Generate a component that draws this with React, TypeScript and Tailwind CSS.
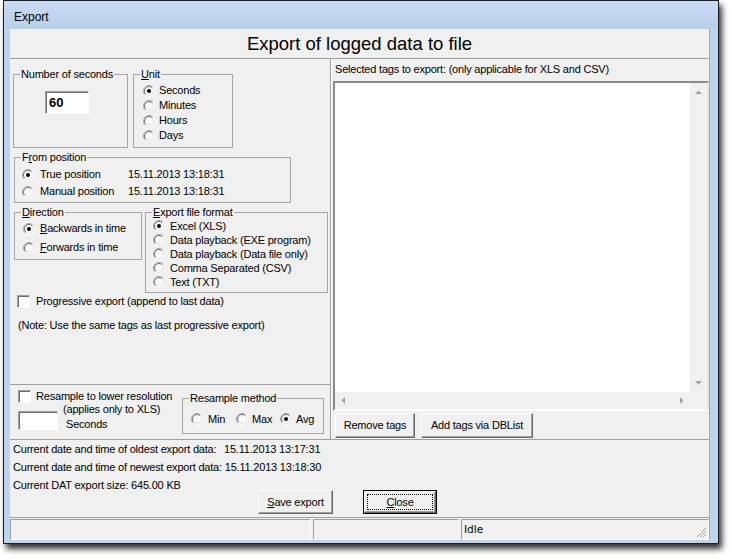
import React from "react";

const Radio = ({ checked }: { checked?: boolean }) => (
  <svg width="12" height="12" viewBox="0 0 12 12" className="shrink-0">
    <circle cx="6" cy="6" r="5" fill="#fbfbfb" />
    <path d="M2.1 9.9 A5.5 5.5 0 0 1 9.9 2.1" stroke="#a9a9a9" fill="none" />
    <path d="M2.8 9.2 A4.5 4.5 0 0 1 9.2 2.8" stroke="#6e6e6e" fill="none" />
    <path d="M9.9 2.1 A5.5 5.5 0 0 1 2.1 9.9" stroke="#ffffff" fill="none" />
    <path d="M9.2 2.8 A4.5 4.5 0 0 1 2.8 9.2" stroke="#e2e2e2" fill="none" />
    {checked && <circle cx="6" cy="6" r="2" fill="#000" />}
  </svg>
);

const CheckBox = () => (
  <div className="w-[13px] h-[13px] shrink-0 bg-white border border-t-[#a0a0a0] border-l-[#a0a0a0] border-b-white border-r-white shadow-[inset_1px_1px_0_#6e6e6e]" />
);

const Group = ({
  label,
  className,
  children,
}: {
  label: React.ReactNode;
  className?: string;
  children?: React.ReactNode;
}) => (
  <fieldset className={`border border-[#a6a6a6] shrink-0 ${className ?? ""}`}>
    <legend className="ml-[6px] px-[1px] leading-[13px]">{label}</legend>
    {children}
  </fieldset>
);

const Btn = ({ children, className }: { children: React.ReactNode; className?: string }) => (
  <button
    type="button"
    className={`flex items-center justify-center bg-[#f0f0f0] border border-t-white border-l-white border-b-[#696969] border-r-[#696969] shadow-[inset_-1px_-1px_0_#a0a0a0] leading-[13px] ${className ?? ""}`}
  >
    {children}
  </button>
);

const Sunken = ({ className, children }: { className?: string; children?: React.ReactNode }) => (
  <div
    className={`bg-white border border-t-[#a0a0a0] border-l-[#a0a0a0] border-b-white border-r-white shadow-[inset_1px_1px_0_#6e6e6e] ${className ?? ""}`}
  >
    {children}
  </div>
);

const Arrow = ({ dir }: { dir: "up" | "down" | "left" | "right" }) => {
  const pts = {
    up: "0,4 7,4 3.5,0.5",
    down: "0,0 7,0 3.5,3.5",
    left: "4,0 4,7 0.5,3.5",
    right: "0,0 0,7 3.5,3.5",
  }[dir];
  const w = dir === "up" || dir === "down" ? 7 : 4;
  const h = dir === "up" || dir === "down" ? 4 : 7;
  return (
    <svg width={w} height={h} viewBox={`0 0 ${w} ${h}`}>
      <polygon points={pts} fill="#a3a3a3" />
    </svg>
  );
};

export default function App() {
  return (
    <div className="w-[730px] h-[560px] bg-white font-['Liberation_Sans',Arial,sans-serif] text-[11px] tracking-[-0.2px] text-black overflow-hidden">
      <div className="ml-[3px] w-[716px] border border-[#1e1e1e] bg-[#bdd3ee] shadow-[3px_5px_6px_rgba(0,0,0,0.8)] flex flex-col">
        {/* title bar */}
        <div className="h-[28px] pl-[10px] pt-[3px] flex items-center bg-gradient-to-b from-[#cadcf3] to-[#b8cfeb] text-[12px] tracking-normal">
          Export
        </div>

        <div className="ml-[6px] mb-[3px] w-[700px] bg-[#f0f0f0] border-r border-[#a8a8a8] flex flex-col">
          {/* heading */}
          <div className="h-[30px] border-b border-[#a0a0a0] flex items-center justify-center text-[18.5px] tracking-normal">
            Export of logged data to file
          </div>

          {/* main */}
          <div className="h-[381px] border-b border-[#a0a0a0] flex">
            {/* left panel */}
            <div className="w-[320px] flex flex-col">
              <div className="flex-1 pt-[9px]">
                <div className="flex gap-[5px] pl-[3px]">
                  <Group label="Number of seconds" className="w-[115px] h-[80px]">
                    <Sunken className="mt-[10px] ml-[31px] w-[44px] h-[23px] flex items-center pl-[3px]">
                      <span className="font-bold text-[13px] tracking-normal">60</span>
                    </Sunken>
                  </Group>
                  <Group label={<><u>U</u>nit</>} className="w-[100px] h-[80px]">
                    <div className="pt-[2px]">
                      {["Seconds", "Minutes", "Hours", "Days"].map((u, i) => (
                        <div key={u} className="h-[15px] flex items-center gap-[4px] pl-[9px]">
                          <Radio checked={i === 0} />
                          <span className="leading-[13px]">{u}</span>
                        </div>
                      ))}
                    </div>
                  </Group>
                </div>

                <Group label={<>F<u>r</u>om position</>} className="mt-[3px] ml-[4px] w-[277px] h-[52px]">
                  <div className="pt-[2px]">
                    {["True position", "Manual position"].map((p, i) => (
                      <div key={p} className="h-[17px] flex items-center pl-[7px]">
                        <Radio checked={i === 0} />
                        <span className="ml-[6px] w-[88px] leading-[13px]">{p}</span>
                        <span className="leading-[13px]">15.11.2013 13:18:31</span>
                      </div>
                    ))}
                  </div>
                </Group>

                <div className="mt-[3px] ml-[4px] flex items-start gap-[3px]">
                  <Group label={<><u>D</u>irection</>} className="w-[128px] h-[54px]">
                    <div className="h-[19px] flex items-center gap-[5px] pl-[8px]">
                      <Radio checked />
                      <span className="leading-[13px]">
                        <u>B</u>ackwards in time
                      </span>
                    </div>
                    <div className="h-[19px] flex items-center gap-[5px] pl-[8px]">
                      <Radio />
                      <span className="leading-[13px]">
                        <u>F</u>orwards in time
                      </span>
                    </div>
                  </Group>
                  <Group label={<><u>E</u>xport file format</>} className="w-[183px] h-[87px]">
                    {[
                      "Excel (XLS)",
                      "Data playback (EXE program)",
                      "Data playback (Data file only)",
                      "Comma Separated (CSV)",
                      "Text (TXT)",
                    ].map((f, i) => (
                      <div key={f} className="h-[14px] flex items-center gap-[5px] pl-[7px]">
                        <Radio checked={i === 0} />
                        <span className="leading-[13px] whitespace-nowrap">{f}</span>
                      </div>
                    ))}
                  </Group>
                </div>

                <div className="mt-[1px] ml-[7px] h-[14px] flex items-center gap-[6px]">
                  <CheckBox />
                  <span className="leading-[13px]">Progressive export (append to last data)</span>
                </div>
                <div className="mt-[10px] ml-[8px] h-[14px] leading-[14px]">
                  (Note: Use the same tags as last progressive export)
                </div>
              </div>

              {/* resample section */}
              <div className="h-[55px] border-t border-[#a0a0a0] flex">
                <div className="w-[172px] pl-[8px] pt-[5px]">
                  <div className="h-[13px] flex items-center gap-[5px]">
                    <CheckBox />
                    <span className="leading-[13px] whitespace-nowrap">Resample to lower resolution</span>
                  </div>
                  <div className="flex items-start">
                    <Sunken className="mt-[8px] w-[40px] h-[19px] shrink-0" />
                    <div className="ml-[5px] -mt-[1px] leading-[15px]">
                      <div className="whitespace-nowrap">(applies only to XLS)</div>
                      <div className="pl-[3px]">Seconds</div>
                    </div>
                  </div>
                </div>
                <Group label="Resample method" className="mt-[7px] w-[142px] h-[42px]">
                  <div className="pt-[7px] h-[21px] flex items-center">
                    <div className="w-[53px] pl-[8px] flex items-center gap-[5px]">
                      <Radio />
                      <span className="leading-[13px]">Min</span>
                    </div>
                    <div className="w-[44px] flex items-center gap-[4px]">
                      <Radio />
                      <span className="leading-[13px]">Max</span>
                    </div>
                    <div className="flex items-center gap-[4px]">
                      <Radio checked />
                      <span className="leading-[13px]">Avg</span>
                    </div>
                  </div>
                </Group>
              </div>
            </div>

            {/* separator */}
            <div className="w-[2px] border-l border-[#a0a0a0] bg-white" />

            {/* right panel */}
            <div className="flex-1 pt-[4px] flex flex-col">
              <div className="pl-[3px] leading-[13px] whitespace-nowrap">
                Selected tags to export: (only applicable for XLS and CSV)
              </div>
              <div className="mt-[5px] ml-[1px] w-[376px] h-[330px] border-2 border-t-[#8c8c8c] border-l-[#8c8c8c] border-b-white border-r-[#e6e6e6] flex flex-col">
                <div className="flex-1 flex">
                  <div className="flex-1 bg-white" />
                  <div className="w-[17px] bg-[#f0f0f0] flex flex-col items-center justify-between py-[7px]">
                    <Arrow dir="up" />
                    <Arrow dir="down" />
                  </div>
                </div>
                <div className="h-[17px] flex">
                  <div className="flex-1 bg-[#f0f0f0] flex items-center justify-between px-[6px]">
                    <Arrow dir="left" />
                    <Arrow dir="right" />
                  </div>
                  <div className="w-[17px] bg-[#f0f0f0]" />
                </div>
              </div>
              <div className="mt-[2px] pl-[3px] flex gap-[6px]">
                <Btn className="w-[80px] h-[25px]">Remove tags</Btn>
                <Btn className="w-[112px] h-[25px]">Add tags via DBList</Btn>
              </div>
            </div>
          </div>

          {/* info area */}
          <div className="h-[77px] pl-[3px]">
            <div className="h-[18px] flex items-center whitespace-nowrap">
              <span className="w-[211px]">Current date and time of oldest export data:</span>
              <span>15.11.2013 13:17:31</span>
            </div>
            <div className="h-[18px] flex items-center whitespace-nowrap">
              Current date and time of newest export data: 15.11.2013 13:18:30
            </div>
            <div className="flex items-start">
              <div className="w-[245px] h-[18px] flex items-center whitespace-nowrap">
                Current DAT export size: 645.00 KB
              </div>
              <Btn className="mt-[14px] w-[75px] h-[24px]">
                <span>
                  <u>S</u>ave export
                </span>
              </Btn>
              <button
                type="button"
                className="ml-[30px] mt-[14px] w-[74px] h-[24px] border border-black flex"
              >
                <div className="flex-1 flex items-center justify-center bg-[#f0f0f0] border border-t-white border-l-white border-b-[#696969] border-r-[#696969] shadow-[inset_-1px_-1px_0_#a0a0a0] p-[2px]">
                  <div className="w-full h-full border border-dotted border-black flex items-center justify-center leading-[13px]">
                    <span>
                      <u>C</u>lose
                    </span>
                  </div>
                </div>
              </button>
            </div>
          </div>

          {/* status bar */}
          <div className="h-[23px] border-t border-[#a0a0a0] pt-[1px] flex gap-[2px]">
            <div className="w-[301px] h-[21px] border border-t-[#a0a0a0] border-l-[#a0a0a0] border-b-white border-r-white" />
            <div className="w-[146px] h-[21px] border border-t-[#a0a0a0] border-l-[#a0a0a0] border-b-white border-r-white" />
            <div className="flex-1 h-[21px] border border-t-[#a0a0a0] border-l-[#a0a0a0] border-b-white border-r-white flex items-center justify-between pl-[2px]">
              <span className="font-['DejaVu_Sans',sans-serif] text-[10.5px] tracking-normal leading-[13px]">Idle</span>
              <svg width="11" height="11" viewBox="0 0 11 11" className="self-end mb-[1px] mr-[1px]">
                <path d="M10 1 L1 10 M10 4 L4 10 M10 7 L7 10" stroke="#a0a0a0" strokeWidth="1" />
                <path d="M10.5 2.5 L2.5 10.5 M10.5 5.5 L5.5 10.5 M10.5 8.5 L8.5 10.5" stroke="#ffffff" strokeWidth="1" />
              </svg>
            </div>
          </div>
        </div>
      </div>
    </div>
  );
}
